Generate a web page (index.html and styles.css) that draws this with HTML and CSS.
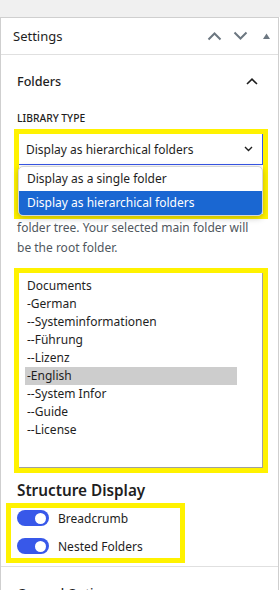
FILE: index.html
```html
<!DOCTYPE html>
<html lang="en">
<head>
<meta charset="utf-8">
<link rel="stylesheet" href="styles.css">
</head>
<body>
<div class="topbar"></div>
<div class="panel">
  <div class="panel-header">
    <span class="panel-title">Settings</span>
    <div class="panel-icons">
      <svg class="ico-chev" width="15" height="10" viewBox="0 0 15 10"><path d="M1.5 8.5 L7.5 2.5 L13.5 8.5" fill="none" stroke="#6c7781" stroke-width="2"/></svg>
      <svg class="ico-chev" width="15" height="10" viewBox="0 0 15 10"><path d="M1.5 1.5 L7.5 7.5 L13.5 1.5" fill="none" stroke="#6c7781" stroke-width="2"/></svg>
      <svg class="ico-tri" width="7" height="6" viewBox="0 0 7 6"><path d="M0 6 L3.5 0.5 L7 6 Z" fill="#6c7781"/></svg>
    </div>
  </div>
  <div class="section">
    <div class="section-head">
      <span>Folders</span>
      <svg width="12" height="7" viewBox="0 0 12 7"><path d="M1 6 L6 1.2 L11 6" fill="none" stroke="#1e1e1e" stroke-width="1.6"/></svg>
    </div>
    <div class="field-label">LIBRARY TYPE</div>
    <div class="hl hl-select">
      <div class="select">
        <span>Display as hierarchical folders</span>
        <svg width="9" height="6" viewBox="0 0 9 6"><path d="M1 1 L4.5 4.5 L8 1" fill="none" stroke="#1e1e1e" stroke-width="1.4"/></svg>
      </div>
      <ul class="dropdown">
        <li>Display as a single folder</li>
        <li class="active">Display as hierarchical folders</li>
      </ul>
    </div>
    <p class="desc">folder tree. Your selected main folder will be the root folder.</p>
    <div class="hl hl-list">
      <ul class="listbox">
        <li>Documents</li>
        <li>-German</li>
        <li>--Systeminformationen</li>
        <li>--Führung</li>
        <li>--Lizenz</li>
        <li class="selected">-English</li>
        <li>--System Infor</li>
        <li>--Guide</li>
        <li>--License</li>
      </ul>
    </div>
    <h3 class="sub-title">Structure Display</h3>
    <div class="hl hl-toggles">
      <label class="toggle-row"><span class="toggle"><span class="knob"></span></span><span>Breadcrumb</span></label>
      <label class="toggle-row"><span class="toggle"><span class="knob"></span></span><span>Nested Folders</span></label>
    </div>
  </div>
  <div class="section">
    <div class="section-head">
      <span>General Options</span>
      <svg width="12" height="7" viewBox="0 0 12 7"><path d="M1 6 L6 1.2 L11 6" fill="none" stroke="#1e1e1e" stroke-width="1.6"/></svg>
    </div>
  </div>
</div>
</body>
</html>
```
FILE: styles.css
```css
* { box-sizing: border-box; }
html, body { margin: 0; padding: 0; }
body {
  width: 280px;
  height: 590px;
  overflow: hidden;
  background: #fff;
  font-family: "Noto Sans", sans-serif;
  font-size: 12px;
  color: #1e1e1e;
}
.topbar { height: 17px; background: #f0f0f0; }
.panel {
  width: 279px;
  border: 1px solid #cfcfcf;
  border-bottom: none;
  background: #fff;
}
.panel-header {
  height: 37px;
  border-bottom: 1px solid #e0e0e0;
  display: flex;
  align-items: center;
  justify-content: space-between;
  padding: 0 8px 0 12px;
}
.panel-title { font-size: 13px; line-height: 20px; }
.panel-icons { display: flex; align-items: center; }
.ico-chev { margin-left: 11px; }
.ico-tri { margin-left: 15px; }
.section {
  padding: 16px 16px 3px 16px;
  border-bottom: 1px solid #e0e0e0;
}
.section-head {
  display: flex;
  align-items: center;
  justify-content: space-between;
  height: 20px;
  font-size: 12.6px;
  font-weight: 500;
  padding-right: 4px;
}
.field-label {
  margin-top: 19px;
  font-size: 10.3px;
  font-weight: 500;
  line-height: 16px;
  text-transform: uppercase;
}
.hl { border: 5px solid #fff200; }
.hl-select {
  margin: 3px 0 0 -3px;
  width: 254px;
  height: 90px;
  position: relative;
}
.select {
  height: 31px;
  border-bottom: 1px solid #3858e9;
  border-right: 1px solid #3858e9;
  display: flex;
  align-items: center;
  justify-content: space-between;
  padding: 0 9px 0 7px;
}
.dropdown {
  list-style: none;
  margin: 1px 0 0 -1px;
  padding: 0;
  border: 1px solid #d6d6d6;
  border-radius: 5px;
  box-shadow: 0 2px 6px rgba(0,0,0,0.25);
  overflow: hidden;
  background: #fff;
  position: relative;
}
.dropdown li {
  height: 24px;
  line-height: 24px;
  padding-left: 8px;
}
.dropdown li.active { background: #1a67d2; color: #fff; }
.desc {
  margin: -1px 0 0 0;
  color: #50575e;
  line-height: 20px;
}
.hl-list {
  margin: 10px 0 0 -3px;
  width: 254px;
  height: 205px;
}
.listbox {
  list-style: none;
  margin: 0;
  height: 100%;
  padding: 4px 0 0 6px;
  border-right: 1px solid #a0a0a0;
  border-bottom: 1px solid #a0a0a0;
}
.listbox li {
  height: 18px;
  line-height: 18px;
  width: 212px;
  padding-left: 2px;
}
.listbox li.selected { background: #cdcdcd; }
.sub-title {
  margin: 7px 0 0 0;
  font-size: 15.3px;
  font-weight: 600;
  line-height: 20px;
}
.hl-toggles {
  margin: 3px 0 0 -11px;
  width: 179px;
  height: 60px;
  padding: 0 0 0 6px;
  display: flex;
  flex-direction: column;
  gap: 8px;
}
.toggle-row {
  display: flex;
  align-items: center;
  height: 20px;
  gap: 9px;
  color: #1e1e1e;
}
.toggle {
  width: 32px;
  height: 16px;
  border-radius: 8px;
  background: #3858e9;
  display: flex;
  align-items: center;
  justify-content: flex-end;
  padding-right: 3px;
}
.knob {
  width: 11px;
  height: 11px;
  border-radius: 50%;
  background: #fff;
}
```
